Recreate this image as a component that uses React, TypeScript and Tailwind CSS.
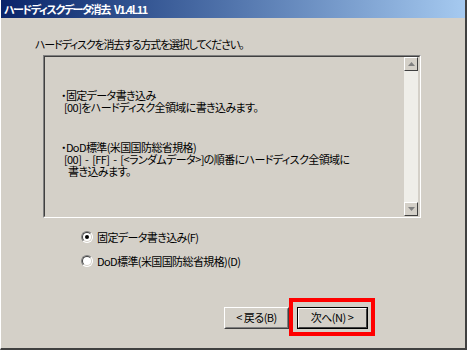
const jp = { fontFamily: '"Noto Sans CJK JP", "Noto Sans", sans-serif' };

function Radio({ checked }: { checked?: boolean }) {
  return (
    <span className="relative w-[12px] h-[12px] rounded-full bg-white border border-t-[#808080] border-l-[#808080] border-b-white border-r-white flex items-center justify-center shrink-0">
      <span className="absolute inset-0 rounded-full border border-t-[#404040] border-l-[#404040] border-b-[#d4d0c8] border-r-[#d4d0c8]" />
      {checked && <span className="w-[4px] h-[4px] rounded-full bg-black" />}
    </span>
  );
}

function ScrollButton({ up }: { up?: boolean }) {
  return (
    <div className="w-[14px] h-[14px] bg-[#d4d0c8] border border-t-white border-l-white border-b-[#404040] border-r-[#404040] flex items-center justify-center">
      <svg width="7" height="4" viewBox="0 0 7 4">
        {up ? (
          <polygon points="3.5,0 7,4 0,4" fill="#808080" />
        ) : (
          <polygon points="0,0 7,0 3.5,4" fill="#808080" />
        )}
      </svg>
    </div>
  );
}

function Button({ label, isDefault }: { label: string; isDefault?: boolean }) {
  return (
    <div
      className={
        'h-[22px] flex items-center justify-center bg-[#d4d0c8] text-[11px] tracking-[-0.5px] text-black ' +
        (isDefault
          ? 'w-[71px] border border-black'
          : 'w-[65px] border border-t-white border-l-white border-b-[#404040] border-r-[#404040]')
      }
    >
      <div
        className={
          'w-full h-full flex items-center justify-center border whitespace-pre ' +
          (isDefault
            ? 'border-t-white border-l-white border-b-[#404040] border-r-[#404040]'
            : 'border-t-[#d4d0c8] border-l-[#d4d0c8] border-b-[#808080] border-r-[#808080]')
        }
      >
        {label}
      </div>
    </div>
  );
}

export default function App() {
  return (
    <div
      className="w-[467px] h-[350px] bg-[#d4d0c8] border-l border-l-white border-r-2 border-r-[#404040] border-b-2 border-b-[#404040] flex flex-col overflow-hidden [font-feature-settings:'palt']"
      style={jp}
    >
      <div className="h-[18px] bg-gradient-to-r from-[#0a246a] to-[#a6caf0] flex items-center pl-[3px]">
        <span className="text-white font-bold text-[11px] tracking-[-1.4px] [word-spacing:3px] leading-[12px] whitespace-pre">
          ハードディスクデータ消去 V1.4L11
        </span>
      </div>

      <div className="mt-[20px] pl-[34px] text-[11px] tracking-[-1.2px] leading-[12px] text-black">
        ハードディスクを消去する方式を選択してください。
      </div>

      <div className="mt-[5px] ml-[42px] w-[378px] h-[163px] border border-t-[#808080] border-l-[#808080] border-b-white border-r-white">
        <div className="w-full h-full border border-t-[#404040] border-l-[#404040] border-b-[#d4d0c8] border-r-[#d4d0c8] flex">
          <div className="flex-1 pt-[32px] text-[11px] tracking-[-0.6px] leading-[12px] text-black whitespace-pre">
            <div className="pl-[16px]">・固定データ書き込み</div>
            <div className="pl-[19px]">[00]をハードディスク全領域に書き込みます。</div>
            <div className="pl-[16px] mt-[28px]">・DoD標準(米国国防総省規格)</div>
            <div className="pl-[19px] [word-spacing:2px]">[00] - [FF] - [&lt;ランダムデータ&gt;]の順番にハードディスク全領域に</div>
            <div className="pl-[23px]">書き込みます。</div>
          </div>
          <div className="w-[14px] mr-[1px] flex flex-col bg-[#efeee9]">
            <ScrollButton up />
            <div className="flex-1" />
            <ScrollButton />
          </div>
        </div>
      </div>

      <div className="mt-[13px] pl-[80px] flex flex-col gap-[12px] text-[11px] tracking-[-0.6px] leading-[12px] text-black">
        <div className="flex items-center gap-[4px]">
          <Radio checked />
          <span>固定データ書き込み(F)</span>
        </div>
        <div className="flex items-center gap-[4px]">
          <Radio />
          <span>DoD標準(米国国防総省規格)(D)</span>
        </div>
      </div>

      <div className="mt-[31px] flex justify-end pr-[90px]">
        <div className="flex items-center">
          <div className="pt-[1px]">
            <Button label="< 戻る(B)" />
          </div>
          <div className="w-[86px] h-[38px] border-4 border-[#ff0000] flex items-center justify-center pt-[1px]">
            <Button label="次へ(N) >" isDefault />
          </div>
        </div>
      </div>
    </div>
  );
}
